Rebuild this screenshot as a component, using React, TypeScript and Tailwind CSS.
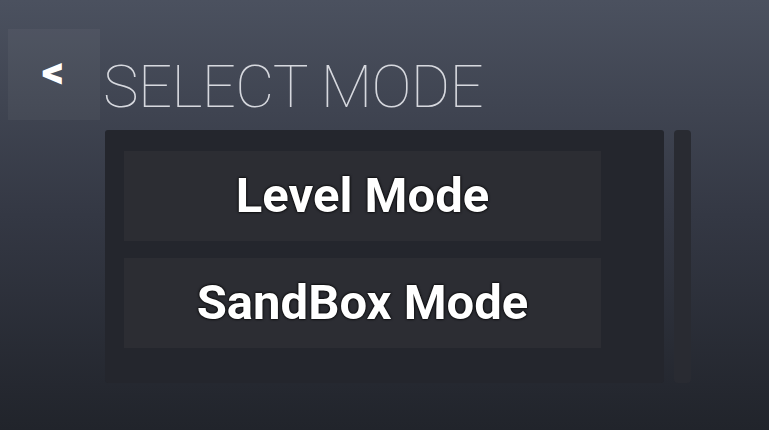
import React from 'react';

const modes = ['Level Mode', 'SandBox Mode'];

const App: React.FC = () => {
  return (
    <div
      className="w-[769px] h-[430px] overflow-hidden bg-gradient-to-b from-[#4b515f] via-[#343844] to-[#21242b]"
      style={{ fontFamily: 'Roboto, "Noto Sans", sans-serif' }}
    >
      <div className="flex items-start pt-[29px] pl-2">
        <button className="w-[92px] h-[91px] bg-[#ffffff0a] flex items-center justify-center text-white font-black text-[44px] leading-none pb-[6px] pr-[2px]">
          &lt;
        </button>
        <h1 className="ml-[3px] mt-[28px] text-[60px] leading-[60px] font-thin text-[#d6d8de] tracking-[-0.6px]">
          SELECT MODE
        </h1>
      </div>
      <div className="flex ml-[105px] mt-[10px] gap-[10px]">
        <div className="w-[559px] h-[253px] bg-[#24262d] rounded-[3px] pl-[19px] pt-[21px] flex flex-col gap-[17px]">
          {modes.map((m) => (
            <button
              key={m}
              className="w-[477px] h-[90px] bg-[#2c2d33] text-white font-bold text-[49px] leading-none flex items-center justify-center pb-[2px] [text-shadow:0_0_3px_#000,0_0_2px_#000]"
            >
              {m}
            </button>
          ))}
        </div>
        <div className="w-[17px] h-[253px] bg-[#292b32] rounded-[4px]" />
      </div>
    </div>
  );
};

export default App;
